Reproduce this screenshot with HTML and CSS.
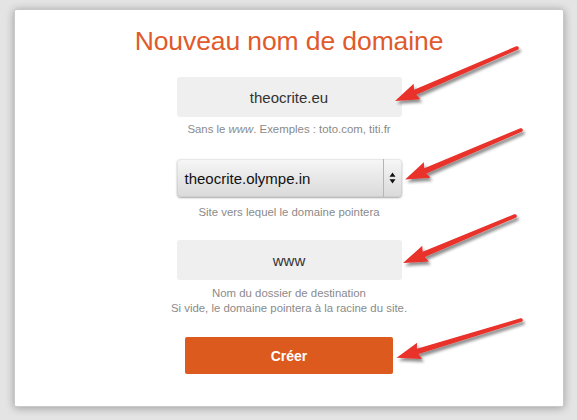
FILE: index.html
```html
<!DOCTYPE html>
<html lang="fr">
<head>
<meta charset="utf-8">
<title>Nouveau nom de domaine</title>
<link rel="stylesheet" href="styles.css">
</head>
<body>
<div class="card">
  <h1 class="title">Nouveau nom de domaine</h1>
  <div class="field field-domain">
    <div class="input">theocrite.eu</div>
    <p class="hint">Sans le <em>www</em>. Exemples : toto.com, titi.fr</p>
  </div>
  <div class="field field-site">
    <div class="select">
      <span class="select-value">theocrite.olympe.in</span>
      <span class="select-arrows">
        <svg width="7" height="12" viewBox="0 0 7 12"><path d="M3.5 0.5 L6.5 4.8 L0.5 4.8 Z M3.5 11.5 L6.5 7.2 L0.5 7.2 Z" fill="#111"/></svg>
      </span>
    </div>
    <p class="hint">Site vers lequel le domaine pointera</p>
  </div>
  <div class="field field-folder">
    <div class="input">www</div>
    <p class="hint hint-two">Nom du dossier de destination<br>Si vide, le domaine pointera à la racine du site.</p>
  </div>
  <button class="btn" type="button">Créer</button>
</div>

<svg class="arrows" width="577" height="420" viewBox="0 0 577 420">
  <defs>
    <filter id="sh" x="-20%" y="-50%" width="140%" height="200%">
      <feGaussianBlur in="SourceAlpha" stdDeviation="1.6"/>
      <feOffset dx="2" dy="2.5" result="b"/>
      <feComponentTransfer><feFuncA type="linear" slope="0.45"/></feComponentTransfer>
      <feMerge><feMergeNode/><feMergeNode in="SourceGraphic"/></feMerge>
    </filter>
  </defs>
  <g fill="#e8302c" filter="url(#sh)">
    <g transform="translate(517 48) rotate(156.5)">
      <path d="M0 -1.8 L111 -2.8 L109 -8.5 L133 0 L109 8.5 L111 2.8 L0 1.8 A1.8 1.8 0 0 1 0 -1.8 Z"/>
    </g>
    <g transform="translate(521 130) rotate(156.9)">
      <path d="M0 -1.8 L104 -2.8 L102 -8.5 L126 0 L102 8.5 L104 2.8 L0 1.8 A1.8 1.8 0 0 1 0 -1.8 Z"/>
    </g>
    <g transform="translate(515 216) rotate(157.2)">
      <path d="M0 -1.8 L99 -2.8 L97 -8.5 L121.5 0 L97 8.5 L99 2.8 L0 1.8 A1.8 1.8 0 0 1 0 -1.8 Z"/>
    </g>
    <g transform="translate(521 320) rotate(163.1)">
      <path d="M0 -1.8 L108 -2.8 L106 -8.5 L130 0 L106 8.5 L108 2.8 L0 1.8 A1.8 1.8 0 0 1 0 -1.8 Z"/>
    </g>
  </g>
</svg>
</body>
</html>
```
FILE: styles.css
```css
html, body {
  margin: 0;
  padding: 0;
}
body {
  width: 577px;
  height: 420px;
  background: #e4e4e4;
  padding: 9px 0 0 14px;
  box-sizing: border-box;
  font-family: "Liberation Sans", Arial, sans-serif;
  position: relative;
  overflow: hidden;
}
.card {
  width: 550px;
  height: 398px;
  box-sizing: border-box;
  background: #fff;
  border: 1px solid #c9c9c9;
  border-radius: 2px;
  box-shadow: 0 1px 9px rgba(0, 0, 0, 0.32);
  padding-top: 15px;
  display: flex;
  flex-direction: column;
  align-items: center;
}
.title {
  margin: 0;
  font-weight: normal;
  font-size: 26.5px;
  line-height: 32px;
  color: #e05a2b;
  letter-spacing: -0.1px;
}
.field {
  display: flex;
  flex-direction: column;
  align-items: center;
}
.field-domain { margin-top: 20px; }
.field-site { margin-top: 23px; }
.field-folder { margin-top: 21px; }
.input {
  width: 225px;
  height: 40px;
  box-sizing: border-box;
  background: #efefef;
  border-radius: 3px;
  display: flex;
  align-items: center;
  justify-content: center;
  font-size: 15px;
  color: #333;
}
.hint {
  margin: 5px 0 0;
  font-size: 11.4px;
  line-height: 14px;
  color: #8a8a8a;
  text-align: center;
}
.field-site .hint { margin-top: 8px; }
.hint-two {
  margin-top: 6px;
  line-height: 15px;
}
.select {
  width: 225px;
  height: 38px;
  box-sizing: border-box;
  border-radius: 4px;
  background: linear-gradient(#f7f7f7, #e9e9e9 45%, #dadada);
  box-shadow: 0 1px 2px rgba(0, 0, 0, 0.35), inset 0 0 0 1px rgba(0, 0, 0, 0.06);
  display: flex;
  align-items: stretch;
}
.select-value {
  flex: 1;
  display: flex;
  align-items: center;
  padding-left: 8px;
  font-size: 15px;
  color: #111;
  border-right: 1px solid #b5b5b5;
}
.select-arrows {
  width: 18px;
  display: flex;
  align-items: center;
  justify-content: center;
}
.btn {
  margin-top: 21px;
  width: 208px;
  height: 37px;
  border: none;
  border-radius: 2px;
  background: #dd5a1e;
  color: #fff;
  font-family: "Liberation Sans", Arial, sans-serif;
  font-weight: bold;
  font-size: 14px;
  padding: 0;
}
.arrows {
  position: absolute;
  left: 0;
  top: 0;
}
```
